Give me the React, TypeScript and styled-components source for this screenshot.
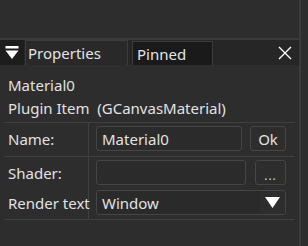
import React from 'react';
import styled, { createGlobalStyle } from 'styled-components';

const GlobalStyle = createGlobalStyle`
  html, body {
    margin: 0;
    padding: 0;
    background: #2d2d2d;
  }

  body {
    font-family: 'Noto Sans', 'Open Sans', sans-serif;
    font-size: 15px;
    color: #e2e2e2;
  }
`;

const Screen = styled.div`
  display: flex;
  width: 308px;
  height: 246px;
  background: #2d2d2d;
  overflow: hidden;
`;

const Panel = styled.div`
  display: flex;
  flex-direction: column;
  width: 299px;
  border-right: 2px solid #3b3b3b;
`;

const TopSpace = styled.div`
  flex: none;
  height: 38px;
  border-bottom: 2px solid #3b3b3b;
`;

const Header = styled.div`
  display: flex;
  flex: none;
  align-items: stretch;
  height: 25px;
  background: #262626;
`;

const MenuIcon = styled.div`
  display: flex;
  align-items: center;
  justify-content: center;
  width: 24px;
  background: #1d1d1d;
`;

const Tab = styled.div<{ $dark?: boolean; $width: number }>`
  display: flex;
  align-items: center;
  box-sizing: border-box;
  width: ${(p) => p.$width}px;
  padding-left: ${(p) => (p.$dark ? 4 : 2)}px;
  margin-left: ${(p) => (p.$dark ? 4 : 1)}px;
  margin-top: ${(p) => (p.$dark ? 1 : 0)}px;
  background: ${(p) => (p.$dark ? '#1a1a1a' : '#292929')};
  border: 1px solid #3c3c3c;
  border-bottom: none;
  color: #e4e4e4;
`;

const CloseButton = styled.div`
  display: flex;
  align-items: center;
  justify-content: center;
  margin-left: auto;
  margin-right: 7px;
  width: 14px;
`;

const Info = styled.div`
  display: flex;
  flex: none;
  flex-direction: column;
  gap: 3px;
  padding: 10px 8px 0;
  line-height: 20px;
`;

const Table = styled.div`
  display: flex;
  flex-direction: column;
  margin: 4px 4px 0;
  width: 291px;
  border-top: 1px solid #3f3f3f;
  border-bottom: 1px solid #3f3f3f;
`;

const Row = styled.div<{ $divider?: boolean }>`
  display: flex;
  border-bottom: ${(p) => (p.$divider ? '1px solid #3f3f3f' : 'none')};
`;

const Label = styled.div<{ $bottom: number }>`
  display: flex;
  align-items: center;
  box-sizing: border-box;
  width: 85px;
  padding: 3px 0 ${(p) => p.$bottom}px 4px;
  border-right: 1px solid #3f3f3f;
  white-space: nowrap;
`;

const Value = styled.div<{ $bottom: number }>`
  display: flex;
  flex: 1;
  gap: 8px;
  padding: 3px 9px ${(p) => p.$bottom}px 7px;
`;

const Field = styled.div`
  display: flex;
  align-items: center;
  flex: 1;
  box-sizing: border-box;
  height: 25px;
  padding-left: 5px;
  background: #2b2b2b;
  border: 1px solid #454545;
  border-radius: 3px;
`;

const SmallButton = styled.div<{ $width: number }>`
  display: flex;
  align-items: center;
  justify-content: center;
  box-sizing: border-box;
  width: ${(p) => p.$width}px;
  height: 25px;
  margin-left: ${(p) => (p.$width < 34 ? 1 : 0)}px;
  background: #2d2d2d;
  border: 1px solid #454545;
  border-radius: 3px;
`;

const Dots = styled.span`
  font-size: 12px;
  letter-spacing: 1px;
  padding-top: 5px;
  color: #d0d0d0;
`;

const Select = styled.div`
  display: flex;
  flex: 1;
  box-sizing: border-box;
  height: 25px;
  background: #2a2a2a;
  border: 1px solid #454545;
  border-radius: 3px;
  overflow: hidden;
`;

const SelectText = styled.div`
  display: flex;
  align-items: center;
  flex: 1;
  padding-left: 5px;
`;

const SelectArrow = styled.div`
  display: flex;
  align-items: center;
  justify-content: center;
  width: 25px;
  background: #2d2d2d;
`;

export default function App() {
  return (
    <>
      <GlobalStyle />
      <Screen>
        <Panel>
          <TopSpace />
          <Header>
            <MenuIcon>
              <svg width='14' height='14' viewBox='0 0 14 14'>
                <rect x='0.5' y='0' width='13' height='2.5' fill='#ffffff' />
                <polygon points='0.5,4.5 13.5,4.5 7,13' fill='#ffffff' />
              </svg>
            </MenuIcon>
            <Tab $width={103}>Properties</Tab>
            <Tab $dark $width={81}>Pinned</Tab>
            <CloseButton>
              <svg width='14' height='14' viewBox='0 0 14 14'>
                <path d='M1 1 L13 13 M13 1 L1 13' stroke='#ffffff' strokeWidth='1.4' />
              </svg>
            </CloseButton>
          </Header>
          <Info>
            <div>Material0</div>
            <div>Plugin Item&nbsp;&nbsp;(GCanvasMaterial)</div>
          </Info>
          <Table>
            <Row $divider>
              <Label $bottom={5}>Name:</Label>
              <Value $bottom={5}>
                <Field>Material0</Field>
                <SmallButton $width={36}>Ok</SmallButton>
              </Value>
            </Row>
            <Row>
              <Label $bottom={2}>Shader:</Label>
              <Value $bottom={2}>
                <Field />
                <SmallButton $width={31}>
                  <Dots>...</Dots>
                </SmallButton>
              </Value>
            </Row>
            <Row>
              <Label $bottom={4}>Render text</Label>
              <Value $bottom={4}>
                <Select>
                  <SelectText>Window</SelectText>
                  <SelectArrow>
                    <svg width='15' height='11' viewBox='0 0 15 11'>
                      <polygon points='0,0 15,0 7.5,11' fill='#ffffff' />
                    </svg>
                  </SelectArrow>
                </Select>
              </Value>
            </Row>
          </Table>
        </Panel>
      </Screen>
    </>
  );
}
